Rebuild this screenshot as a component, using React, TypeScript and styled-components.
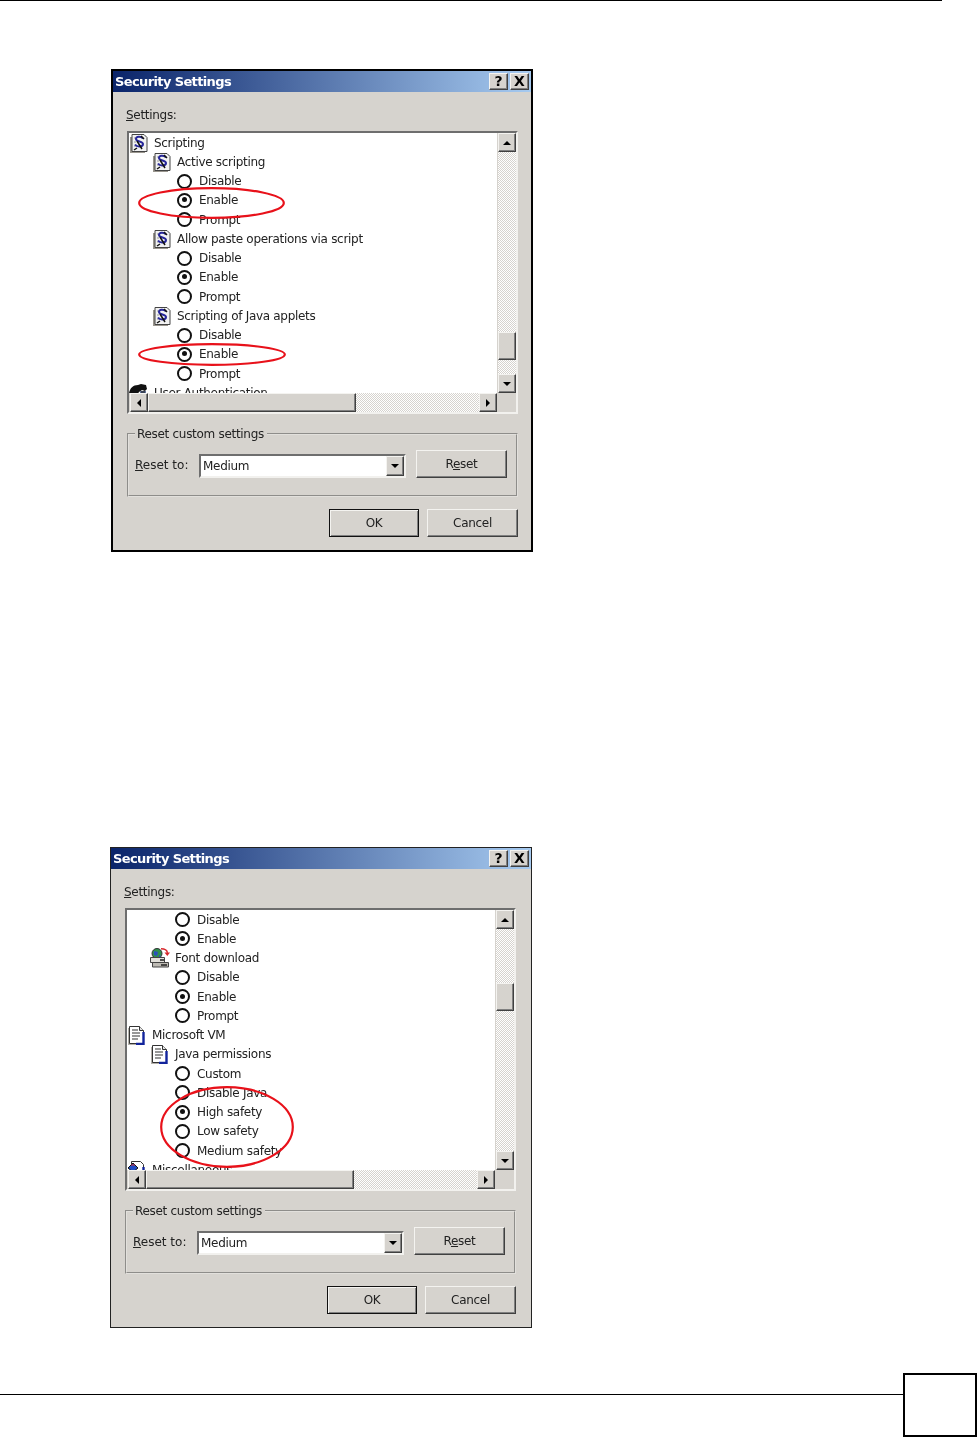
import styled, { createGlobalStyle, css } from 'styled-components';

const GlobalStyle = createGlobalStyle`
  html, body {
    margin: 0;
    padding: 0;
    background: #fff;
  }
`;

const face = '#d6d3ce';
const uiFont = `"DejaVu Sans", "Liberation Sans", sans-serif`;

const raised = css`
  background: ${face};
  border: 1px solid;
  border-color: #f4f3f0 #404040 #404040 #f4f3f0;
  box-shadow: inset -1px -1px 0 #808080;
  box-sizing: border-box;
`;

const dither = css`
  background: repeating-conic-gradient(${face} 0 25%, #fff 0 50%) 0 0 / 2px 2px;
`;

const Page = styled.div`
  display: flex;
  flex-direction: column;
  height: 1438px;
  overflow: hidden;
`;

const HeaderRule = styled.div`
  width: 942px;
  height: 1px;
  background: #000;
  flex: none;
`;

const Dialog = styled.div<{ $thin?: boolean; $x: number; $y: number }>`
  position: relative;
  flex: none;
  align-self: flex-start;
  width: ${(p) => (p.$thin ? 420 : 418)}px;
  margin: ${(p) => p.$y}px 0 0 ${(p) => p.$x}px;
  border: ${(p) => (p.$thin ? '1px solid #222' : '2px solid #000')};
  background: ${face};
  font: 12px/16px ${uiFont};
  letter-spacing: -0.3px;
  color: #222;
  filter: blur(0.35px);
`;

const TitleBar = styled.div`
  display: flex;
  align-items: center;
  height: 21px;
  padding: 0 2px;
  background: linear-gradient(90deg, #0a246a 0%, #a6caf0 100%);
`;

const Title = styled.div`
  flex: 1;
  color: #fff;
  font-weight: 700;
  font-size: 13px;
  letter-spacing: -0.62px;
`;

const TitleButton = styled.div`
  ${raised}
  width: 19px;
  height: 17px;
  margin-left: 2px;
  display: flex;
  align-items: center;
  justify-content: center;
  font-weight: 700;
  font-size: 14px;
  line-height: 15px;
  letter-spacing: 0;
  color: #000;
`;

const Content = styled.div<{ $thin?: boolean }>`
  padding: 0 ${(p) => (p.$thin ? 15 : 13)}px 13px 14px;
`;

const SettingsLabel = styled.div`
  height: 16px;
  margin: 15px 0 8px -1px;
`;

const ListBox = styled.div`
  display: grid;
  grid-template-columns: 1fr 19px;
  grid-template-rows: 260px 19px;
  height: 283px;
  box-sizing: border-box;
  border: 2px solid;
  border-color: #6e6e6e #f2f1ee #f2f1ee #6e6e6e;
  background: ${face};
`;

const TreeView = styled.div`
  background: #fff;
  overflow: hidden;
`;

const TreeRow = styled.div<{ $indent: number }>`
  display: flex;
  align-items: center;
  height: 19.25px;
  padding-left: ${(p) => p.$indent}px;
  white-space: nowrap;
`;

const TreeIcon = styled.svg`
  width: 20px;
  height: 20px;
  margin-right: 5px;
  flex: none;
`;

const Radio = styled.span<{ $checked?: boolean }>`
  position: relative;
  flex: none;
  width: 15px;
  height: 15px;
  margin-right: 7px;
  box-sizing: border-box;
  border: 2.4px solid #111;
  border-radius: 50%;
  background: #fff;
  ${(p) =>
    p.$checked &&
    css`
      &::after {
        content: '';
        position: absolute;
        left: 2.6px;
        top: 2.6px;
        width: 5px;
        height: 5px;
        border-radius: 50%;
        background: #111;
      }
    `}
`;

const VScroll = styled.div`
  ${dither}
  display: flex;
  flex-direction: column;
  margin-left: 1px;
`;

const HScroll = styled.div`
  ${dither}
  display: flex;
  margin-left: 1px;
`;

const Corner = styled.div`
  background: ${face};
`;

const ScrollButton = styled.div`
  ${raised}
  flex: none;
  width: 18px;
  height: 19px;
  display: flex;
  align-items: center;
  justify-content: center;
`;

const Arrow = styled.span<{ $dir: 'up' | 'down' | 'left' | 'right' }>`
  width: 0;
  height: 0;
  border: 4.5px solid transparent;
  ${(p) =>
    p.$dir === 'up' &&
    css`
      border-top: 0;
      border-bottom-color: #000;
    `}
  ${(p) =>
    p.$dir === 'down' &&
    css`
      border-bottom: 0;
      border-top-color: #000;
    `}
  ${(p) =>
    p.$dir === 'left' &&
    css`
      border-left: 0;
      border-right-color: #000;
    `}
  ${(p) =>
    p.$dir === 'right' &&
    css`
      border-right: 0;
      border-left-color: #000;
    `}
`;

const VThumb = styled.div<{ $top: number }>`
  ${raised}
  flex: none;
  height: 28px;
  width: 18px;
  margin-top: ${(p) => p.$top}px;
`;

const VSpacer = styled.div`
  flex: 1;
`;

const HThumb = styled.div`
  ${raised}
  flex: none;
  width: 208px;
`;

const GroupBox = styled.fieldset`
  margin: 12px 0 0;
  padding: 0 0 17px 6px;
  height: 71px;
  box-sizing: border-box;
  border: 2px groove #e2e0dc;
  display: block;
  min-width: 0;
`;

const GroupLegend = styled.legend`
  margin-left: 0;
  padding: 0 3px 0 2px;
  line-height: 16px;
`;

const ResetRow = styled.div`
  display: flex;
  align-items: flex-end;
  height: 28px;
  margin-top: 8px;
`;

const ResetLabel = styled.div`
  width: 64px;
  margin-bottom: 5px;
  flex: none;
  letter-spacing: 0;
`;

const Select = styled.div`
  flex: none;
  display: flex;
  align-items: center;
  width: 207px;
  height: 24px;
  box-sizing: border-box;
  border: 2px solid;
  border-color: #6e6e6e #f2f1ee #f2f1ee #6e6e6e;
  background: #fff;
  padding-left: 2px;
`;

const SelectValue = styled.span`
  flex: 1;
`;

const SelectButton = styled(ScrollButton)`
  height: 20px;
`;

const PushButton = styled.div<{ $width: number; $default?: boolean }>`
  ${raised}
  flex: none;
  width: ${(p) => p.$width}px;
  height: 28px;
  display: flex;
  align-items: center;
  justify-content: center;
  ${(p) =>
    p.$default &&
    css`
      border-color: #111;
      box-shadow: inset 1px 1px 0 #f4f3f0, inset -1px -1px 0 #808080;
    `}
`;

const ResetButton = styled(PushButton)`
  margin-left: 10px;
`;

const ButtonRow = styled.div`
  display: flex;
  justify-content: flex-end;
  gap: 8px;
  margin-top: 12px;
`;

const Ellipse = styled.svg<{ $left: number; $top: number; $w: number; $h: number }>`
  position: absolute;
  left: ${(p) => p.$left}px;
  top: ${(p) => p.$top}px;
  width: ${(p) => p.$w}px;
  height: ${(p) => p.$h}px;
  pointer-events: none;
`;

const Footer = styled.div`
  display: flex;
  flex: none;
  margin-top: auto;
  padding-bottom: 1px;
`;

const FooterRule = styled.div`
  flex: 1;
  height: 1px;
  margin-top: 21px;
  background: #000;
`;

const PageBox = styled.div`
  flex: none;
  width: 74px;
  height: 64px;
  box-sizing: border-box;
  border: 2px solid #000;
`;

type IconName = 'script' | 'page' | 'font' | 'user' | 'misc';

const Icon = ({ name }: { name: IconName }) => {
  if (name === 'script') {
    return (
      <TreeIcon viewBox="0 0 20 20">
        <path d="M1 4h2v15h13v1H1z" fill="#9a968e" />
        <path d="M3 1.500h12l3 3v14H3z" fill="#f2f2f2" stroke="#444" />
        <path d="M5 5h3M5 9h2M5 13h2" stroke="#9a9a9a" />
        <path d="M14 5.500c-2-2.500-7-2.500-7 .5s7 2 7 5-6 3.500-8 .5" fill="none" stroke="#26269a" strokeWidth="2" />
        <path d="M8 8l5 8M12 3l3 3M8 15l-3 2" stroke="#111" strokeWidth="1.500" />
      </TreeIcon>
    );
  }
  if (name === 'page') {
    return (
      <TreeIcon viewBox="0 0 20 20">
        <path d="M1 3h2v15h10v2H1z" fill="#b4b1aa" />
        <path d="M2.500 1.500h10l4 4v13h-14z" fill="#fff" stroke="#333" />
        <path d="M5 5h6M5 8h8M5 11h8M5 14h6" stroke="#777" strokeWidth="1.300" />
        <path d="M12.500 1.500v4h4" fill="#e4e4e4" stroke="#333" />
        <path d="M16.500 7v12H9" fill="none" stroke="#12249c" strokeWidth="2.400" />
      </TreeIcon>
    );
  }
  if (name === 'font') {
    return (
      <TreeIcon viewBox="0 0 20 20">
        <circle cx="7" cy="5.500" r="5" fill="#2f8f4e" stroke="#333" />
        <path d="M4 3l4 1-1 4-3-1zM9 7l2 1-2 2z" fill="#2a50c0" />
        <path d="M11 .8c4 0 6 1 6.500 4" fill="none" stroke="#d8282c" strokeWidth="1.400" />
        <path d="M14.500 4.500h5.500l-2.700 3.500z" fill="#d8282c" />
        <path d="M.5 9.500h14v5H.5z" fill="#e2e0da" stroke="#444" />
        <path d="M2.500 14.500h16v4.500h-16z" fill="#bdbab3" stroke="#444" />
        <path d="M10 12h4M11 17h6" stroke="#222" strokeWidth="1.300" />
      </TreeIcon>
    );
  }
  if (name === 'user') {
    return (
      <TreeIcon viewBox="0 0 20 20">
        <path d="M0 10c1-5 4-8 9-8l3-1 5 1 1 4-2 2-3-1-3 2-2 3H3z" fill="#111" />
        <path d="M11 8h6v8h-6z" fill="#64769c" />
        <path d="M13 8v4M15 8v4" stroke="#111" />
      </TreeIcon>
    );
  }
  return (
    <TreeIcon viewBox="0 0 20 20">
      <path d="M4.500 1.500h9l3 3v14h-12z" fill="#fff" stroke="#333" />
      <path d="M1 8l5-5 5 5-5 4z" fill="#1f4cc4" stroke="#111" />
      <path d="M4 5h4" stroke="#d8282c" />
      <path d="M16.500 7v12H9" fill="none" stroke="#12249c" strokeWidth="2.400" />
    </TreeIcon>
  );
};

type Row =
  | { kind: 'group'; level: 0 | 1; icon: IconName; label: string }
  | { kind: 'radio'; label: string; checked?: boolean };

const group = (level: 0 | 1, icon: IconName, label: string): Row => ({ kind: 'group', level, icon, label });
const radio = (label: string, checked = false): Row => ({ kind: 'radio', label, checked });

const scriptingRows: Row[] = [
  group(0, 'script', 'Scripting'),
  group(1, 'script', 'Active scripting'),
  radio('Disable'),
  radio('Enable', true),
  radio('Prompt'),
  group(1, 'script', 'Allow paste operations via script'),
  radio('Disable'),
  radio('Enable', true),
  radio('Prompt'),
  group(1, 'script', 'Scripting of Java applets'),
  radio('Disable'),
  radio('Enable', true),
  radio('Prompt'),
  group(0, 'user', 'User Authentication'),
];

const javaRows: Row[] = [
  radio('Disable'),
  radio('Enable', true),
  group(1, 'font', 'Font download'),
  radio('Disable'),
  radio('Enable', true),
  radio('Prompt'),
  group(0, 'page', 'Microsoft VM'),
  group(1, 'page', 'Java permissions'),
  radio('Custom'),
  radio('Disable Java'),
  radio('High safety', true),
  radio('Low safety'),
  radio('Medium safety'),
  group(0, 'misc', 'Miscellaneous'),
];

const renderRow = (row: Row, index: number) =>
  row.kind === 'radio' ? (
    <TreeRow $indent={48} key={index}>
      <Radio $checked={row.checked} />
      {row.label}
    </TreeRow>
  ) : (
    <TreeRow $indent={row.level === 0 ? 0 : 23} key={index}>
      <Icon name={row.icon} />
      {row.label}
    </TreeRow>
  );

type Ring = { left: number; top: number; w: number; h: number };

const SecurityDialog = ({ rows, thin, x, y, thumbTop, rings }: { rows: Row[]; thin?: boolean; x: number; y: number; thumbTop: number; rings: Ring[] }) => (
  <Dialog $thin={thin} $x={x} $y={y}>
    <TitleBar>
      <Title>Security Settings</Title>
      <TitleButton>?</TitleButton>
      <TitleButton>X</TitleButton>
    </TitleBar>
    <Content $thin={thin}>
      <SettingsLabel>
        <u>S</u>ettings:
      </SettingsLabel>
      <ListBox>
        <TreeView>{rows.map(renderRow)}</TreeView>
        <VScroll>
          <ScrollButton>
            <Arrow $dir="up" />
          </ScrollButton>
          <VThumb $top={thumbTop} />
          <VSpacer />
          <ScrollButton>
            <Arrow $dir="down" />
          </ScrollButton>
        </VScroll>
        <HScroll>
          <ScrollButton>
            <Arrow $dir="left" />
          </ScrollButton>
          <HThumb />
          <VSpacer />
          <ScrollButton>
            <Arrow $dir="right" />
          </ScrollButton>
        </HScroll>
        <Corner />
      </ListBox>
      <GroupBox>
        <GroupLegend>Reset custom settings</GroupLegend>
        <ResetRow>
          <ResetLabel>
            <u>R</u>eset to:
          </ResetLabel>
          <Select>
            <SelectValue>Medium</SelectValue>
            <SelectButton>
              <Arrow $dir="down" />
            </SelectButton>
          </Select>
          <ResetButton $width={91}>
            <span>
              R<u>e</u>set
            </span>
          </ResetButton>
        </ResetRow>
      </GroupBox>
      <ButtonRow>
        <PushButton $width={90} $default>
          OK
        </PushButton>
        <PushButton $width={91}>Cancel</PushButton>
      </ButtonRow>
    </Content>
    {rings.map((r) => (
      <Ellipse key={r.top} $left={r.left} $top={r.top} $w={r.w} $h={r.h} viewBox={`0 0 ${r.w} ${r.h}`}>
        <ellipse cx={r.w / 2} cy={r.h / 2} rx={r.w / 2 - 1.2} ry={r.h / 2 - 1.2} fill="none" stroke="#e8111a" strokeWidth="2.2" />
      </Ellipse>
    ))}
  </Dialog>
);

const App = () => (
  <>
    <GlobalStyle />
    <Page>
      <HeaderRule />
      <SecurityDialog
        rows={scriptingRows}
        x={111}
        y={68}
        thumbTop={180}
        rings={[
          { left: 25, top: 116, w: 147, h: 32 },
          { left: 25, top: 272, w: 148, h: 23 },
        ]}
      />
      <SecurityDialog
        thin
        rows={javaRows}
        x={110}
        y={295}
        thumbTop={54}
        rings={[{ left: 49, top: 238, w: 134, h: 82 }]}
      />
      <Footer>
        <FooterRule />
        <PageBox />
      </Footer>
    </Page>
  </>
);

export default App;
